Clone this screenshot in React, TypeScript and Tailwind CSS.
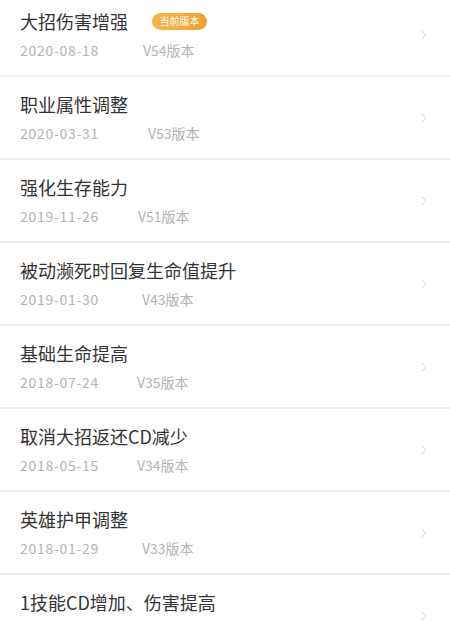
import { ChevronRight } from "lucide-react";

// version history list, newest first (last row's meta line falls below the fold)
const versions = [
  { title: "大招伤害增强", date: "2020-08-18", ver: "V54版本", current: true, dateCls: "w-[123px]" },
  { title: "职业属性调整", date: "2020-03-31", ver: "V53版本", current: false, dateCls: "w-[128px]" },
  { title: "强化生存能力", date: "2019-11-26", ver: "V51版本", current: false, dateCls: "w-[118px]" },
  { title: "被动濒死时回复生命值提升", date: "2019-01-30", ver: "V43版本", current: false, dateCls: "w-[122px]" },
  { title: "基础生命提高", date: "2018-07-24", ver: "V35版本", current: false, dateCls: "w-[117px]" },
  { title: "取消大招返还CD减少", date: "2018-05-15", ver: "V34版本", current: false, dateCls: "w-[117px]" },
  { title: "英雄护甲调整", date: "2018-01-29", ver: "V33版本", current: false, dateCls: "w-[122px]" },
  { title: "1技能CD增加、伤害提高", date: "", ver: "", current: false, dateCls: "w-[122px]" },
];

export default function App() {
  return (
    <div
      className="h-[621px] w-[450px] overflow-hidden bg-white"
      style={{ fontFamily: '"Noto Sans CJK SC", "Noto Sans", sans-serif' }}
    >
      <ul className="-mt-[6px]">
        {versions.map((v, i) => (
          <li key={i} className="flex h-[83px] items-center border-b-2 border-[#eeeeee] pl-5 pr-[18px]">
            <div className="flex flex-1 flex-col">
              <div className="flex h-6 items-center">
                <span className="text-[18px] leading-6 text-[#333333]">{v.title}</span>
                {v.current && (
                  <span className="ml-6 flex h-[17px] w-[55px] items-center justify-center rounded-full bg-gradient-to-r from-[#f6b54a] to-[#f0a22e] text-[10px] leading-none text-white">
                    当前版本
                  </span>
                )}
              </div>
              <div className="mt-[7px] flex h-5 items-center text-[14px] leading-5 text-[#b3b3b3]">
                {v.date && <span className={`${v.dateCls} tracking-[0.7px]`}>{v.date}</span>}
                {v.ver && <span>{v.ver}</span>}
              </div>
            </div>
            <ChevronRight className="h-4 w-4 text-[#cccccc]" strokeWidth={1.25} />
          </li>
        ))}
      </ul>
    </div>
  );
}
